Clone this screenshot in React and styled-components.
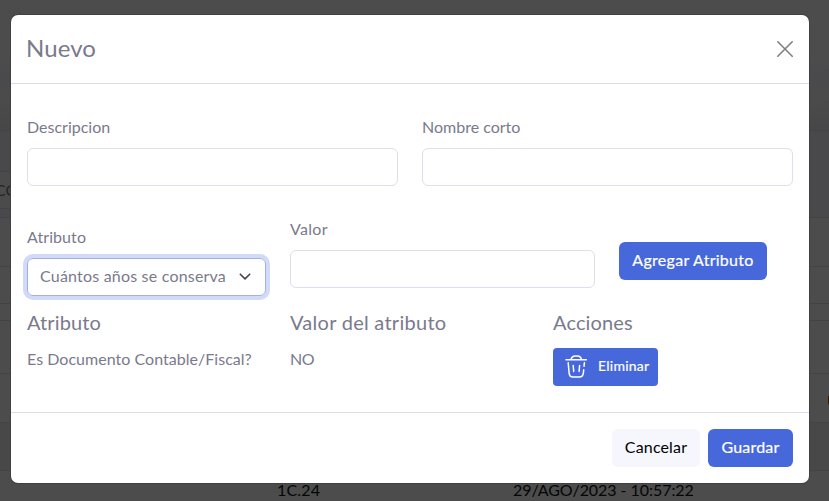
import React from 'react';
import styled, { createGlobalStyle } from 'styled-components';

const GlobalStyle = createGlobalStyle`
  *, *::before, *::after { box-sizing: border-box; }
  body {
    margin: 0;
    overflow: hidden;
    background: #4c4c4c;
    color: #7a7a8c;
    font: 400 16px/24px Lato, "Noto Sans", sans-serif;
  }
  input, select, button { font: inherit; }
`;

const Screen = styled.div`
  position: relative;
  width: 829px;
  height: 501px;
  overflow: hidden;
`;

const Page = styled.div`
  display: flex;
  flex-direction: column;
  height: 501px;
  background: #4c4c4c;
  color: #050506;
`;

const TopFade = styled.div`
  flex: none;
  height: 131px;
  background: linear-gradient(#4c4c4c 42%, #4a4a4d 58%, #4b4b4b 76%, #474749);
  border-bottom: 1px solid #434346;
`;

const Filters = styled.div`
  flex: none;
  height: 87px;
  padding-top: 40px;
  background: #49494c;
  border-bottom: 1px solid #424247;
`;

const FilterInput = styled.div`
  width: 240px;
  height: 38px;
  padding: 6px 0;
  margin-left: -6px;
  border: 1px solid #424247;
  background: #4b4b4b;
  color: #242426;
`;

const Line = styled.div`
  display: grid;
  grid-template-columns: 277px 236px 314px 1fr;
  align-items: center;
  flex: none;
  height: ${(p) => p.$h}px;
  background: ${(p) => (p.$shade ? '#484848' : '#4c4c4c')};
  border-bottom: 1px solid #434347;
  white-space: nowrap;
`;

const Cell = styled.span`
  padding-top: ${(p) => p.$drop || 0}px;
  letter-spacing: ${(p) => p.$track || 0}px;
`;

const Modal = styled.section`
  position: absolute;
  top: 15px;
  left: 11px;
  display: flex;
  flex-direction: column;
  width: 798px;
  height: 468px;
  background: #fff;
  border-radius: 7px;
  box-shadow: 0 0 0 1px #404040;
`;

const Header = styled.header`
  display: flex;
  align-items: center;
  justify-content: space-between;
  height: 69px;
  padding: 0 16px;
  border-bottom: 1px solid #dcdce8;
`;

const Title = styled.h5`
  margin: -2px 0 0 -1px;
  font-size: 24px;
  font-weight: 400;
  line-height: 36px;
  letter-spacing: 0.1px;
`;

const CloseButton = styled.button`
  display: flex;
  padding: 0;
  border: 0;
  background: none;
  color: #808080;
`;

const Body = styled.div`
  flex: 1;
  padding: 31px 16px 0;
`;

const FieldRow = styled.div`
  display: grid;
  grid-template-columns: 1fr 1fr;
  gap: 24px;
`;

const AttributeRow = styled.div`
  display: grid;
  grid-template-columns: 239px 305px 148px;
  gap: 24px;
  margin-top: 31px;
  align-items: start;
`;

const Field = styled.label`
  display: flex;
  flex-direction: column;
  gap: 9px;
  padding-top: ${(p) => p.$drop || 0}px;
`;

const Text = styled.span`
  letter-spacing: ${(p) => p.$track || 0}px;
  white-space: nowrap;
`;

const Input = styled.input`
  width: 100%;
  height: 38px;
  padding: 6px 12px;
  border: 1px solid #dedeec;
  border-radius: 6px;
  background: #fff;
  color: inherit;
  outline: none;
`;

const Select = styled.div`
  display: flex;
  align-items: center;
  justify-content: space-between;
  height: 38px;
  padding: 0 12px 2px 12px;
  border: 1px solid #a0b0ed;
  border-radius: 6px;
  box-shadow: 0 0 0 4px #d2daf7;
  color: #7a7a8c;
`;

const Button = styled.button`
  display: flex;
  align-items: center;
  justify-content: center;
  width: ${(p) => p.$w}px;
  height: 38px;
  padding: 0 0 2px;
  border: 0;
  border-radius: 6px;
  background: ${(p) => (p.$light ? '#f6f7fc' : '#4768db')};
  color: ${(p) => (p.$light ? '#000' : '#fff')};
  letter-spacing: ${(p) => p.$track || 0}px;
  -webkit-text-stroke: ${(p) => (p.$light ? 0 : 0.2)}px currentColor;
  white-space: nowrap;
  margin-top: ${(p) => p.$drop || 0}px;
`;

const DeleteButton = styled(Button)`
  justify-content: flex-start;
  gap: 9px;
  padding: 0 0 2px 11px;
  border-radius: 4px;
  font-size: 14px;
`;

const Grid = styled.div`
  display: grid;
  grid-template-columns: repeat(3, 239px);
  column-gap: 24px;
  row-gap: 13px;
  margin-top: 14px;
`;

const Heading = styled.h5`
  margin: 0;
  font-size: 20px;
  font-weight: 400;
  line-height: 24px;
  letter-spacing: ${(p) => p.$track}px;
`;

const Footer = styled.footer`
  display: flex;
  align-items: center;
  justify-content: flex-end;
  gap: 8px;
  height: 71px;
  padding: 0 16px;
  border-top: 1px solid #dcdcec;
`;

const CloseIcon = () => (
  <svg width="16" height="16" viewBox="0 0 16 16" fill="none" stroke="currentColor" strokeWidth="1.6" strokeLinecap="round">
    <path d="M.8.8 15.2 15.2M15.2.8.8 15.2" />
  </svg>
);

const Chevron = () => (
  <svg width="16" height="12" viewBox="0 0 16 12" fill="none" stroke="#46464f" strokeWidth="1.6" strokeLinecap="round" strokeLinejoin="round">
    <path d="m3.3 4.2 4.7 4.7 4.7-4.7" />
  </svg>
);

const TrashIcon = () => (
  <svg width="25" height="26" viewBox="0 0 25 26" fill="none" stroke="#fff" strokeWidth="1.5" strokeLinecap="round" strokeLinejoin="round">
    <path d="M2 6.7h20.3M7 6.2C7.7 3.8 9.2 2.9 11 2.9h2.4c1.9 0 3.5 1 4 3.3" />
    <path d="M4.2 9.7l.9 10.2c.2 2.8 1.3 4.2 4 4.2h6.2c2.7 0 3.8-1.4 4.1-4.2l.3-3.2M20 13.3l.4-3.5" />
    <path d="m9.2 12.4.5 6M15.6 12.4l-.5 6" />
  </svg>
);

export default function App() {
  return (
    <>
      <GlobalStyle />
      <Screen>
        <Page>
          <TopFade />
          <Filters>
            <FilterInput>CO</FilterInput>
          </Filters>
          <Line $h={49} />
          <Line $h={37} />
          <Line $h={17} />
          <Line $h={53} />
          <Line $h={49}>
            <span />
            <span />
            <span />
            <Cell $drop={6}>U</Cell>
          </Line>
          <Line $h={48} $shade />
          <Line $h={38}>
            <span />
            <Cell $track={0.2}>1C.24</Cell>
            <Cell $track={-0.05}>29/AGO/2023 - 10:57:22</Cell>
          </Line>
        </Page>
        <Modal role="dialog" aria-modal="true">
          <Header>
            <Title>Nuevo</Title>
            <CloseButton aria-label="Cerrar">
              <CloseIcon />
            </CloseButton>
          </Header>
          <Body>
            <FieldRow>
              <Field>
                <Text>Descripcion</Text>
                <Input />
              </Field>
              <Field>
                <Text>Nombre corto</Text>
                <Input />
              </Field>
            </FieldRow>
            <AttributeRow>
              <Field $drop={8}>
                <Text $track={0.08}>Atributo</Text>
                <Select role="combobox" tabIndex={0}>
                  <Text $track={0.2}>Cuántos años se conserva</Text>
                  <Chevron />
                </Select>
              </Field>
              <Field>
                <Text $track={0.3}>Valor</Text>
                <Input />
              </Field>
              <Button $w={148} $drop={25} $track={0.28}>Agregar Atributo</Button>
            </AttributeRow>
            <Grid>
              <Heading $track={0.12}>Atributo</Heading>
              <Heading $track={0.27}>Valor del atributo</Heading>
              <Heading $track={0.12}>Acciones</Heading>
              <Text $track={0.03}>Es Documento Contable/Fiscal?</Text>
              <Text $track={-0.4}>NO</Text>
              <DeleteButton $w={105} $drop={1} $track={0.25}>
                <TrashIcon />
                Eliminar
              </DeleteButton>
            </Grid>
          </Body>
          <Footer>
            <Button $w={88} $light $track={0.15}>Cancelar</Button>
            <Button $w={85} $track={0.2}>Guardar</Button>
          </Footer>
        </Modal>
      </Screen>
    </>
  );
}
